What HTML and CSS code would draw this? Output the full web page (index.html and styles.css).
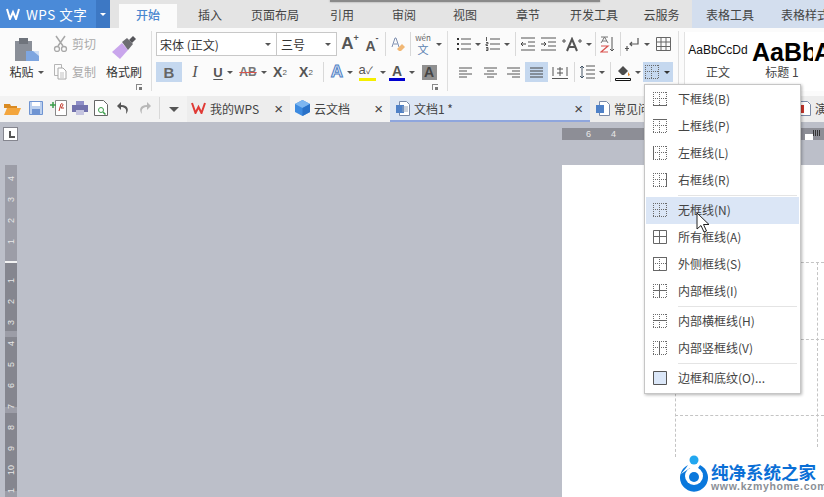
FILE: index.html
```html
<!DOCTYPE html>
<html lang="zh-CN">
<head>
  <meta charset="UTF-8" />
  <title>WPS 文字</title>
  <link rel="stylesheet" href="styles.css">
</head>
<body>
  <svg class="defs" width="0" height="0">
    <symbol id="dots" viewBox="0 0 14 14">
      <path d="M0 .5h14M0 13.500h14M.5 0v14M13.500 0v14M6.500 0v14M0 6.500h14" fill="none" stroke="#6a6a6a" stroke-dasharray="1 1"/>
    </symbol>
  </svg>

  <div class="tabbar">
    <div class="brand">
      <svg class="brand-logo" viewBox="0 0 14 12"><path d="M1 1l3 10 3-7 3 7 3-10" fill="none" stroke="#fff" stroke-width="2"/></svg>
      <span class="brand-name">WPS 文字</span>
      <span class="brand-menu"><i class="arrow arrow-white"></i></span>
    </div>
    <div class="tab-gap"></div>
    <div class="tab tab-active">开始</div>
    <div class="tab">插入</div>
    <div class="tab">页面布局</div>
    <div class="tab">引用</div>
    <div class="tab">审阅</div>
    <div class="tab">视图</div>
    <div class="tab">章节</div>
    <div class="tab">开发工具</div>
    <div class="tab">云服务</div>
    <div class="tab tab-context">表格工具</div>
    <div class="tab tab-context tab-clip">表格样式</div>
    <div class="window-shadow"></div>
  </div>

  <div class="ribbon">
    <section class="group group-clip">
      <div class="paste">
        <svg width="26" height="25" viewBox="0 0 26 25"><rect x="1" y="4" width="17" height="20" fill="#8a8f98"/><rect x="5" y="1" width="9" height="6" fill="#6f747c"/><path d="M12 14h13v10H12z" fill="#7ea6e0"/><path d="M19 14l6 5v-5z" fill="#cfdff5"/></svg>
        <span class="tool-label">粘贴<i class="arrow"></i></span>
      </div>
      <div class="clip-small">
        <div class="clip-item">
          <svg width="15" height="17" viewBox="0 0 15 17"><path d="M3 1l7 10M12 1L5 11" stroke="#a8a8a8" stroke-width="1.500"/><circle cx="4" cy="14" r="2.500" fill="none" stroke="#a8a8a8" stroke-width="1.300"/><circle cx="11" cy="14" r="2.500" fill="none" stroke="#a8a8a8" stroke-width="1.300"/></svg>
          <span>剪切</span>
        </div>
        <div class="clip-item">
          <svg width="15" height="17" viewBox="0 0 15 17"><path d="M1.500 1.500h7v11h-7z" fill="none" stroke="#b5b5b5"/><path d="M5 5h5l3 3v8H5z" fill="#fff" stroke="#a8a8a8"/><path d="M7 10h4M7 12h4M7 14h4" stroke="#c0c0c0"/></svg>
          <span>复制</span>
        </div>
      </div>
      <div class="painter">
        <svg width="26" height="25" viewBox="0 0 26 25"><path d="M1 17l10-9 6 7-8 9z" fill="#c9a6ec"/><path d="M11 7l5-4 6 6-5 6z" fill="#6d6d72"/><path d="M18 5l4-4 3 3-4 4z" fill="#55555a"/></svg>
        <span class="tool-label">格式刷</span>
      </div>
      <i class="launcher"></i>
    </section>

    <section class="group group-font">
      <div class="font-top">
        <div class="select">宋体 (正文)<i class="arrow"></i></div>
        <div class="select select-size">三号<i class="arrow"></i></div>
        <div class="tool glyph-big">A<sup>+</sup></div>
        <div class="tool glyph-mid">A<sup>-</sup></div>
        <div class="divider"></div>
        <div class="tool">
          <svg width="16" height="17" viewBox="0 0 16 17"><path d="M2 11L5 2h1l3 9M3.500 8h4" fill="none" stroke="#7e8fb0"/><path d="M7 13l5-5 3 3-4 4H9z" fill="#f1b774"/></svg>
        </div>
        <div class="divider"></div>
        <div class="tool tool-wen">
          <span class="wen"><small>wén</small><span>文</span></span><i class="arrow"></i>
        </div>
      </div>
      <div class="font-bottom">
        <div class="tool tool-on text-b">B</div>
        <div class="tool text-i">I</div>
        <div class="tool"><span class="text-u">U</span><i class="arrow"></i></div>
        <div class="tool"><span class="text-s">AB</span><i class="arrow"></i></div>
        <div class="tool text-x">X<sup>2</sup></div>
        <div class="tool text-x">X<sub>2</sub></div>
        <div class="divider"></div>
        <div class="tool"><span class="text-effect">A</span><i class="arrow"></i></div>
        <div class="tool"><span class="text-mark">a<em>✓</em></span><i class="arrow"></i></div>
        <div class="tool"><span class="text-color">A</span><i class="arrow"></i></div>
        <div class="tool"><span class="text-shade">A</span></div>
      </div>
      <i class="launcher"></i>
    </section>

    <section class="group group-para">
      <div class="para-top">
        <div class="tool">
          <svg width="15" height="14" viewBox="0 0 15 14"><path d="M5 2h10M5 7h10M5 12h10" stroke="#555"/><path d="M1 1h2v2H1zM1 6h2v2H1zM1 11h2v2H1z" fill="#333"/></svg><i class="arrow"></i>
        </div>
        <div class="tool">
          <svg width="15" height="16" viewBox="0 0 15 16"><path d="M5 3h10M5 8h10M5 13h10" stroke="#555"/><path d="M1.500 1v4M1 6.500h2v1.500H1v1.500h2M1 11.500h2v3H1M1 13h2" fill="none" stroke="#333" stroke-width=".8"/></svg><i class="arrow"></i>
        </div>
        <div class="divider"></div>
        <div class="tool">
          <svg width="14" height="14" viewBox="0 0 14 14"><path d="M0 1h14M7 5h7M7 9h7M0 13h14" stroke="#555"/><path d="M5 7H0M2 5L0 7l2 2" fill="none" stroke="#444"/></svg>
        </div>
        <div class="tool">
          <svg width="16" height="14" viewBox="0 0 16 14"><path d="M0 1h15M7 5h8M7 9h8M0 13h15" stroke="#555"/><path d="M0 7h5M3 5l2 2-2 2" fill="none" stroke="#444"/></svg>
        </div>
        <div class="tool">
          <svg width="20" height="15" viewBox="0 0 20 15"><path d="M5 14l5-12 5 12M6.500 10h7" fill="none" stroke="#555" stroke-width="2"/><path d="M0 4h4M2 2v4M16 4h4M18 2v4" stroke="#555"/></svg><i class="arrow"></i>
        </div>
        <div class="divider"></div>
        <div class="tool">
          <svg width="15" height="17" viewBox="0 0 15 17"><path d="M1 1h7M1 7l3.500-6L8 7M2 5h5" fill="none" stroke="#777"/><path d="M1 10h7L1 16h7" fill="none" stroke="#d9534f" stroke-width="1.200"/><path d="M12 1v14M10 13l2 2 2-2" fill="none" stroke="#555"/></svg>
        </div>
        <div class="divider"></div>
        <div class="tool">
          <svg width="15" height="15" viewBox="0 0 15 15"><path d="M13 1v6H5M7 5L5 7l2 2M2 9v5M0 11.500h4" fill="none" stroke="#555" stroke-width="1.200"/></svg><i class="arrow"></i>
        </div>
        <div class="tool">
          <svg width="15" height="14" viewBox="0 0 15 14"><path d="M.5.500h14v13H.5zM5 .500v13M10 .500v13M.5 5h14M.5 9.500h14" fill="none" stroke="#666"/></svg>
        </div>
      </div>
      <div class="para-bottom">
        <div class="tool">
          <svg width="13" height="11" viewBox="0 0 13 11"><path d="M0 1h13M0 4h8M0 7h13M0 10h8" stroke="#555"/></svg>
        </div>
        <div class="tool">
          <svg width="13" height="11" viewBox="0 0 13 11"><path d="M0 1h13M3 4h7M0 7h13M3 10h7" stroke="#555"/></svg>
        </div>
        <div class="tool">
          <svg width="13" height="11" viewBox="0 0 13 11"><path d="M0 1h13M5 4h8M0 7h13M5 10h8" stroke="#555"/></svg>
        </div>
        <div class="tool tool-on">
          <svg width="13" height="11" viewBox="0 0 13 11"><path d="M0 1h13M0 4h13M0 7h13M0 10h13" stroke="#444"/></svg>
        </div>
        <div class="tool">
          <svg width="16" height="13" viewBox="0 0 16 13"><path d="M0 12.500h16M1 1v9M15 1v9M5 3h6M5 7h6M8 1v9" fill="none" stroke="#555"/></svg>
        </div>
        <div class="divider"></div>
        <div class="tool">
          <svg width="15" height="14" viewBox="0 0 15 14"><path d="M6 1h9M6 5h9M6 9h9M6 13h9" stroke="#555"/><path d="M2 1v12M0 3l2-2 2 2M0 11l2 2 2-2" fill="none" stroke="#456"/></svg><i class="arrow"></i>
        </div>
        <div class="divider"></div>
        <div class="tool">
          <svg width="16" height="17" viewBox="0 0 16 17"><path d="M3 7l5-5 5 5-4 4H7z" fill="#4d4d4d"/><path d="M13 8l2 3-2 1z" fill="#e08a2e"/><path d="M.5 14.500h15v2H.5z" fill="#fff" stroke="#111"/></svg><i class="arrow"></i>
        </div>
        <div class="tool tool-on tool-borders">
          <svg width="14" height="14" viewBox="0 0 14 14"><use href="#dots"/></svg><i class="arrow arrow-dark"></i>
        </div>
      </div>
    </section>

    <section class="gallery">
      <div class="style-card">
        <div class="sample sample-normal">AaBbCcDd</div>
        <div class="style-name">正文</div>
      </div>
      <div class="style-card">
        <div class="sample sample-head">AaBb</div>
        <div class="style-name">标题 1</div>
      </div>
      <div class="style-card">
        <div class="sample sample-head">AaBb</div>
      </div>
    </section>
  </div>

  <div class="quickbar">
    <div class="quick-tools">
      <div class="quick">
        <svg width="17" height="13" viewBox="0 0 17 13"><path d="M0 2h6l1 2h6v2H0z" fill="#d98a22"/><path d="M0 13l3-7h14l-3 7z" fill="#f3a53c"/></svg>
      </div>
      <div class="quick">
        <svg width="14" height="14" viewBox="0 0 14 14"><path d="M.5.500h13v13H.5z" fill="#bcd0ee" stroke="#6f94d2"/><path d="M3 1h8v4H3z" fill="#fff"/><path d="M3 8h8v5H3z" fill="#6f94d2"/></svg>
      </div>
      <div class="quick">
        <svg width="17" height="16" viewBox="0 0 17 16"><path d="M5.500.500h11v15h-11z" fill="#fff" stroke="#888"/><path d="M9 11l2-7c1-1 2 0 2 1l-2 3h3" fill="none" stroke="#c0392b"/><path d="M0 5h6M3 2v6" stroke="#3a9d4a" stroke-width="1.500"/></svg>
      </div>
      <div class="quick">
        <svg width="16" height="14" viewBox="0 0 16 14"><path d="M4 0h8v4H4z" fill="#8f8fc8"/><path d="M0 4h16v7H0z" fill="#7272ad"/><path d="M4 9h8v5H4z" fill="#c5c5e0"/></svg>
      </div>
      <div class="quick">
        <svg width="14" height="16" viewBox="0 0 14 16"><path d="M.5.500h9l4 4v11H.5z" fill="#fff" stroke="#666"/><circle cx="7" cy="10" r="2.500" fill="none" stroke="#3a9d4a"/><path d="M9 12l2.500 2.500" stroke="#3a9d4a" stroke-width="1.500"/></svg>
      </div>
      <div class="quick">
        <svg width="14" height="14" viewBox="0 0 14 14"><path d="M5 1L1 5l4 4V6c4 0 6 2 5 7 3-3 3-9-5-9z" fill="#555"/></svg>
      </div>
      <div class="quick">
        <svg width="14" height="14" viewBox="0 0 14 14"><path d="M9 1l4 4-4 4V6c-4 0-6 2-5 7-3-3-3-9 5-9z" fill="#b8b8b8"/></svg>
      </div>
      <div class="divider divider-quick"></div>
      <div class="quick quick-more"><i class="arrow arrow-big"></i></div>
    </div>
    <div class="doc-tabs">
      <div class="doc-tab doc-tab-home">
        <svg width="15" height="12" viewBox="0 0 15 12"><path d="M1 1l3.500 10L7.500 5l3 6L14 1" fill="none" stroke="#e03a35" stroke-width="2"/></svg>
        <span>我的WPS</span><b class="close">×</b>
      </div>
      <div class="doc-tab doc-tab-cloud">
        <svg width="15" height="16" viewBox="0 0 15 16"><path d="M7.500 0L15 4v8l-7.500 4L0 12V4z" fill="#3d8be0"/><path d="M7.500 8L15 4 7.500 0 0 4z" fill="#7db6f0"/><path d="M7.500 8v8l7.500-4V4z" fill="#2a72c8"/></svg>
        <span>云文档</span><b class="close">×</b>
      </div>
      <div class="doc-tab doc-tab-on">
        <svg width="14" height="15" viewBox="0 0 14 15"><path d="M3.500.500h7l3 3v11h-10z" fill="#fff" stroke="#7a8aa8"/><path d="M0 4h8v8H0z" fill="#4f81c7"/><path d="M6 6h6M6 8h6M6 10h6" stroke="#98a4b8"/></svg>
        <span>文档1 *</span><b class="close">×</b>
      </div>
      <div class="doc-tab">
        <svg width="14" height="15" viewBox="0 0 14 15"><path d="M3.500.500h7l3 3v11h-10z" fill="#fff" stroke="#7a8aa8"/><path d="M0 4h8v8H0z" fill="#4f81c7"/></svg>
        <span>常见问题</span>
      </div>
      <div class="doc-tab doc-tab-last">
        <svg width="14" height="15" viewBox="0 0 14 15"><path d="M3.500.500h7l3 3v11h-10z" fill="#fff" stroke="#7a8aa8"/><path d="M0 4h7v8H0z" fill="#c8352c"/></svg>
        <span>演示</span>
      </div>
    </div>
  </div>

  <main class="workspace">
    <div class="ruler-corner"></div>
    <div class="top-ruler">
      <span>6</span><span>4</span>
    </div>
    <div class="top-ruler-end"><i></i></div>
    <div class="side-ruler">
      <div class="ruler-part ruler-above">
        <span>4</span><span>3</span><span>2</span><span>1</span>
      </div>
      <div class="ruler-part ruler-below">
        <span>1</span><span>2</span><span>3</span><span>4</span><span>5</span><span>6</span><span>7</span><span>8</span><span>9</span><span>10</span><span>1</span>
      </div>
    </div>
    <div class="page">
      <i class="guide-h guide-row1"></i>
      <i class="guide-h guide-row2"></i>
      <i class="guide-h guide-row3"></i>
      <i class="guide-v guide-col1"></i>
      <i class="guide-v guide-col2"></i>
    </div>
  </main>

  <div class="border-menu">
    <div class="menu-item">
      <svg class="menu-icon" viewBox="0 0 14 14"><use href="#dots"/><path d="M0 13.500h14"/></svg>下框线(B)
    </div>
    <div class="menu-item">
      <svg class="menu-icon" viewBox="0 0 14 14"><use href="#dots"/><path d="M0 .5h14"/></svg>上框线(P)
    </div>
    <div class="menu-item">
      <svg class="menu-icon" viewBox="0 0 14 14"><use href="#dots"/><path d="M.5 0v14"/></svg>左框线(L)
    </div>
    <div class="menu-item">
      <svg class="menu-icon" viewBox="0 0 14 14"><use href="#dots"/><path d="M13.500 0v14"/></svg>右框线(R)
    </div>
    <div class="menu-sep"></div>
    <div class="menu-item menu-item-on">
      <svg class="menu-icon" viewBox="0 0 14 14"><use href="#dots"/></svg>无框线(N)
    </div>
    <div class="menu-item">
      <svg class="menu-icon" viewBox="0 0 14 14"><path d="M.5.500h13v13H.5zM6.500 0v14M0 6.500h14"/></svg>所有框线(A)
    </div>
    <div class="menu-item">
      <svg class="menu-icon" viewBox="0 0 14 14"><use href="#dots"/><path d="M.5.500h13v13H.5z"/></svg>外侧框线(S)
    </div>
    <div class="menu-item">
      <svg class="menu-icon" viewBox="0 0 14 14"><use href="#dots"/><path d="M6.500 0v14M0 6.500h14"/></svg>内部框线(I)
    </div>
    <div class="menu-sep"></div>
    <div class="menu-item">
      <svg class="menu-icon" viewBox="0 0 14 14"><use href="#dots"/><path d="M0 6.500h14"/></svg>内部横框线(H)
    </div>
    <div class="menu-item">
      <svg class="menu-icon" viewBox="0 0 14 14"><use href="#dots"/><path d="M6.500 0v14"/></svg>内部竖框线(V)
    </div>
    <div class="menu-sep"></div>
    <div class="menu-item">
      <svg class="menu-icon menu-icon-box" viewBox="0 0 14 14"><path d="M.5.500h13v13H.5z" fill="#dbe7f8"/></svg>边框和底纹(O)...
    </div>
  </div>

  <svg class="cursor" width="14" height="21" viewBox="0 0 14 21"><path d="M1 1v16l4-3.500 3 6.500 2.500-1-3-6.500H13z" fill="#fff" stroke="#222"/></svg>

  <div class="watermark">
    <svg width="28" height="39" viewBox="0 0 28 39"><circle cx="14" cy="5" r="4.500" fill="#22a7f0"/><path d="M8 10a14 14 0 1 0 12 0l-2 3 5 6-9-6h-4l-9 6 5-6z" fill="#0a78dc"/><circle cx="14" cy="21" r="9" fill="#fff"/><circle cx="14" cy="22" r="5" fill="#0a78dc"/></svg>
    <div class="mark-text">
      <div class="mark-title">纯净系统之家</div>
      <div class="mark-url">www.kzmyhome.com</div>
    </div>
  </div>
</body>
</html>
```

FILE: styles.css
```css
* {
  box-sizing: border-box;
}

body {
  margin: 0;
  width: 824px;
  height: 497px;
  overflow: hidden;
  position: relative;
  background: #bcbfc9;
  font-family: "Noto Sans CJK SC", "Noto Sans", sans-serif;
  font-size: 12px;
  color: #444;
}

.defs {
  position: absolute;
}

.arrow {
  display: inline-block;
  width: 0;
  height: 0;
  border-left: 3px solid transparent;
  border-right: 3px solid transparent;
  border-top: 3px solid #555;
}

.arrow-white {
  border-top-color: #fff;
}

.arrow-dark {
  border-top-color: #333;
}

.arrow-big {
  border-left-width: 5px;
  border-right-width: 5px;
  border-top-width: 5px;
}

.divider {
  width: 1px;
  height: 24px;
  background: #d9d9d9;
  justify-self: center;
  align-self: center;
}

/* top tabs */
.tabbar {
  display: grid;
  grid-template-columns: 110px 9px 58px 66px 64px 70px 54px 68px 58px 74px 61px 76px 56px;
  height: 28px;
  background: #e4e4e4;
  position: relative;
  overflow: hidden;
}

.brand {
  display: flex;
  align-items: center;
  background: #4a8ad8;
  color: #fff;
}

.brand-logo {
  width: 14px;
  height: 12px;
  margin-left: 6px;
}

.brand-name {
  margin-left: 6px;
  font-size: 13.500px;
  letter-spacing: .5px;
  flex: 1;
  white-space: nowrap;
}

.brand-menu {
  width: 14px;
  height: 28px;
  background: #3d78c4;
  display: flex;
  align-items: center;
  justify-content: center;
}

.tab {
  display: flex;
  align-items: center;
  justify-content: center;
  white-space: nowrap;
}

.tab-active {
  background: #fbfbfb;
  color: #4a86cf;
  margin-top: 4px;
  padding-bottom: 3px;
  font-weight: 500;
}

.tab-context {
  background: #d3deee;
}

.tab-clip {
  justify-content: flex-start;
  padding-left: 13px;
}

.window-shadow {
  position: absolute;
  left: 330px;
  top: 0;
  width: 270px;
  height: 2px;
  background: #8a8a8a;
  box-shadow: 0 0 2px #8a8a8a;
}

/* ribbon */
.ribbon {
  display: flex;
  height: 68px;
  background: #fbfbfb;
}

.group {
  position: relative;
  border-right: 1px solid #dedede;
  margin: 3px 0 5px;
  flex: none;
}

.group-clip {
  width: 152px;
  display: flex;
}

.group-font {
  width: 296px;
  padding: 1px 0 0 4px;
}

.group-para {
  width: 231px;
  padding: 1px 0 0 5px;
}

.launcher {
  position: absolute;
  right: 9px;
  bottom: 1px;
  width: 6px;
  height: 6px;
  border: 1px solid #888;
  border-width: 1px 0 0 1px;
}

.launcher::after {
  content: "";
  position: absolute;
  right: 0;
  bottom: 0;
  width: 3px;
  height: 3px;
  background: #777;
}

.tool {
  display: flex;
  align-items: center;
  justify-content: center;
  gap: 4px;
  height: 20px;
  white-space: nowrap;
}

.tool-on {
  background: #c5d8ef;
}

.tool-label {
  white-space: nowrap;
  display: flex;
  align-items: center;
  gap: 4px;
  color: #333;
  line-height: 16px;
}

.paste {
  width: 53px;
  display: flex;
  flex-direction: column;
  align-items: center;
  padding: 6px 0 0;
  gap: 2px;
}

.clip-small {
  width: 51px;
  display: flex;
  flex-direction: column;
  gap: 9px;
  padding-top: 3px;
}

.clip-item {
  display: flex;
  align-items: center;
  gap: 4px;
  color: #aaa;
  height: 19px;
}

.painter {
  width: 40px;
  display: flex;
  flex-direction: column;
  align-items: center;
  padding-top: 4px;
  gap: 4px;
}

/* font group */
.font-top {
  display: grid;
  grid-template-columns: 121px 61px 24px 20px 6px 20px 4px 33px;
  height: 24px;
  align-items: center;
}

.font-bottom {
  display: grid;
  grid-template-columns: 26px 26px 30px 30px 24px 28px 6px 32px 28px 32px 22px;
  margin-top: 6px;
  height: 20px;
}

.font-bottom .divider {
  height: 20px;
}

.select {
  height: 24px;
  border: 1px solid #c8c8c8;
  background: #fff;
  display: flex;
  align-items: center;
  justify-content: space-between;
  padding: 0 5px 0 3px;
  color: #333;
}

.select-size {
  border-left: 0;
  padding-left: 4px;
  margin-right: 1px;
}

.glyph-big,
.glyph-mid {
  font-family: "Liberation Sans", sans-serif;
  align-items: flex-end;
  gap: 0;
  color: #555;
  font-weight: bold;
}

.glyph-big {
  font-size: 17px;
}

.glyph-mid {
  font-size: 14px;
}

.glyph-big sup,
.glyph-mid sup {
  font-size: 9px;
  align-self: flex-start;
  line-height: 1;
}

.wen {
  display: flex;
  flex-direction: column;
  align-items: center;
  font-size: 11px;
  line-height: 12px;
  color: #5a7fb0;
}

.wen small {
  font-size: 8px;
  line-height: 10px;
  color: #666;
}

.tool-wen {
  gap: 5px;
  height: 24px;
}

.font-bottom .tool {
  font-family: "Liberation Sans", sans-serif;
  color: #555;
}

.text-b {
  font-weight: bold;
  font-size: 15px;
  color: #666 !important;
}

.text-i {
  font-family: "Liberation Serif", serif !important;
  font-style: italic;
  font-size: 16px;
}

.text-u {
  text-decoration: underline;
  font-weight: bold;
  font-size: 13px;
  text-underline-offset: 2px;
}

.text-s {
  text-decoration: line-through;
  text-decoration-color: #d9534f;
  font-size: 12px;
  font-weight: bold;
  color: #777;
}

.text-x {
  gap: 0;
  font-size: 14px;
  font-weight: bold;
}

.text-x sup,
.text-x sub {
  font-size: 8px;
  font-weight: normal;
}

.text-effect {
  font-size: 17px;
  font-weight: bold;
  color: #dfe9f8;
  -webkit-text-stroke: 1px #4f7fc4;
}

.text-mark {
  font-size: 13px;
  line-height: 14px;
  border-bottom: 3px solid #f5ef00;
  color: #555;
  width: 17px;
}

.text-mark em {
  font-style: normal;
  font-size: 10px;
}

.text-color {
  font-size: 14px;
  font-weight: bold;
  line-height: 14px;
  border-bottom: 3px solid #0000d0;
  width: 16px;
  text-align: center;
}

.text-shade {
  background: #909090;
  color: #444;
  font-size: 14px;
  font-weight: bold;
  width: 15px;
  height: 15px;
  line-height: 15px;
  text-align: center;
}

/* paragraph group */
.para-top {
  display: grid;
  grid-template-columns: 30px 29px 6px 19px 23px 33px 4px 21px 4px 31px 20px;
  height: 24px;
  align-items: center;
}

.para-bottom {
  display: grid;
  grid-template-columns: 25px 24px 23px 23px 24px 4px 32px 4px 31px 30px;
  margin-top: 6px;
  height: 20px;
}

.para-bottom .divider {
  height: 20px;
}

.tool-borders {
  justify-content: flex-start;
  padding-left: 2px;
  gap: 5px;
}

/* style gallery */
.gallery {
  display: grid;
  grid-template-columns: 66px 62px 12px;
  margin: 4px 0 5px 5px;
  background: #fff;
  border-left: 1px solid #e2e2e2;
  overflow: hidden;
}

.style-card {
  display: flex;
  flex-direction: column;
  align-items: center;
  overflow: hidden;
  font-family: "Liberation Sans", sans-serif;
}

.sample {
  height: 28px;
  display: flex;
  align-items: center;
  color: #111;
  white-space: nowrap;
  margin-top: 4px;
  flex: none;
}

.sample-normal {
  font-size: 12px;
}

.sample-head {
  font-size: 25px;
  font-weight: bold;
  color: #000;
  align-self: flex-start;
  padding: 4px 0 0 1px;
}

.style-name {
  margin-top: -1px;
  font-family: "Noto Sans CJK SC", sans-serif;
  color: #444;
}

/* quick access and document tabs */
.quickbar {
  display: flex;
  height: 26px;
  background: #f3f3f3;
}

.quick-tools {
  display: grid;
  grid-template-columns: 24px 23px 23px 20px 21px 23px 22px 7px 22px;
  width: 187px;
  align-items: center;
  padding-bottom: 2px;
}

.quick {
  display: flex;
  align-items: center;
  justify-content: center;
}

.quick-more {
  padding-top: 2px;
}

.divider-quick {
  height: 22px;
}

.doc-tabs {
  display: grid;
  grid-template-columns: 103px 100px 200px 200px 34px;
}

.doc-tab {
  display: flex;
  align-items: center;
  gap: 4px;
  padding: 0 7px 2px 6px;
  background: #ededed;
  white-space: nowrap;
  overflow: hidden;
}

.doc-tab svg,
.doc-tab span {
  flex: none;
}

.doc-tab-home {
  padding-left: 4px;
}

.doc-tab-cloud {
  background: #f3f3f3;
  padding-left: 5px;
}

.doc-tab-on {
  background: #dce6f4;
  border-bottom: 2px solid #8fa6dd;
  padding-bottom: 0;
}

.doc-tab-last {
  padding-left: 7px;
}

.close {
  margin-left: auto;
  font-family: "Liberation Sans", sans-serif;
  font-size: 15px;
  font-weight: normal;
  color: #444;
}

/* document area */
.workspace {
  position: relative;
  height: 375px;
  background: #bcbfc9;
}

.ruler-corner {
  position: absolute;
  left: 3px;
  top: 5px;
  width: 15px;
  height: 14px;
  background: #fff;
  border: 1px solid #85868f;
}

.ruler-corner::after {
  content: "";
  position: absolute;
  left: 5px;
  top: 3px;
  width: 4px;
  height: 5px;
  border: solid #555;
  border-width: 0 0 2px 2px;
}

.top-ruler {
  position: absolute;
  left: 562px;
  top: 6px;
  width: 82px;
  height: 12px;
  background: #8d8e96;
  color: #e8e8e8;
  font-size: 9px;
  line-height: 12px;
  display: flex;
  gap: 20px;
  padding-left: 24px;
  font-family: "Liberation Sans", sans-serif;
}

.top-ruler-end {
  position: absolute;
  left: 801px;
  top: 6px;
  width: 23px;
  height: 12px;
  background: #8d8e96;
}

.top-ruler-end i {
  position: absolute;
  left: 4px;
  top: 6px;
  width: 8px;
  height: 6px;
  background: #fff;
}

.top-ruler-end::after {
  content: "";
  position: absolute;
  left: 12px;
  top: 2px;
  width: 7px;
  height: 6px;
  background: repeating-linear-gradient(90deg, #333 0 1px, transparent 1px 2px);
}

.side-ruler {
  position: absolute;
  left: 5px;
  top: 43px;
  width: 12px;
}

.ruler-part {
  display: flex;
  flex-direction: column;
  color: #e8e8e8;
  font-family: "Liberation Sans", sans-serif;
  font-size: 9px;
}

.ruler-part span {
  height: 21px;
  flex: none;
  display: flex;
  align-items: center;
  justify-content: center;
  writing-mode: vertical-rl;
  transform: rotate(180deg);
}

.ruler-above {
  height: 96px;
  background: #9c9da7;
  padding-top: 3px;
}

.ruler-below {
  height: 242px;
  border-top: 2px solid #f2f2f2;
  padding-top: 7px;
  background: linear-gradient(#85868f 0 68px, #9c9da7 68px 74px, #85868f 74px 144px, #9c9da7 144px 150px, #85868f 150px 228px, #9c9da7 228px);
}

.page {
  position: absolute;
  left: 562px;
  top: 43px;
  width: 262px;
  height: 332px;
  background: #fff;
}

.guide-h,
.guide-v {
  position: absolute;
  border: 0 dashed #c4c4c4;
}

.guide-h {
  left: 113px;
  right: 0;
  border-top-width: 1px;
}

.guide-v {
  top: 97px;
  border-left-width: 1px;
}

.guide-row1 {
  top: 97px;
}

.guide-row2 {
  top: 174px;
}

.guide-row3 {
  top: 250px;
}

.guide-col1 {
  left: 113px;
  height: 195px;
}

.guide-col2 {
  left: 255px;
  height: 185px;
}

/* border dropdown */
.border-menu {
  position: absolute;
  left: 644px;
  top: 84px;
  width: 157px;
  height: 310px;
  padding: 1px;
  background: #fff;
  border: 1px solid #c6c6c6;
  box-shadow: 1px 1px 3px rgba(0, 0, 0, .3);
}

.menu-item {
  display: flex;
  align-items: center;
  height: 27px;
  padding: 0 0 2px 7px;
  white-space: nowrap;
  color: #444;
}

.menu-item-on {
  background: #dbe6f6;
}

.menu-icon {
  width: 14px;
  height: 14px;
  margin-right: 11px;
  flex: none;
  fill: none;
  stroke: #666;
}

.menu-icon-box {
  stroke: #555;
}

.menu-sep {
  height: 1px;
  margin: 1px 2px 1px 32px;
  background: #e4e4e4;
}

.cursor {
  position: absolute;
  left: 696px;
  top: 212px;
}

/* site watermark */
.watermark {
  position: absolute;
  left: 680px;
  top: 455px;
  display: flex;
  gap: 3px;
}

.mark-text {
  padding-top: 8px;
}

.mark-title {
  font-size: 17.500px;
  font-weight: 700;
  line-height: 18px;
  color: #0a6fd6;
  white-space: nowrap;
}

.mark-url {
  font-family: "Liberation Sans", sans-serif;
  font-size: 10.500px;
  font-weight: bold;
  letter-spacing: .65px;
  line-height: 11px;
  color: #8a8f96;
  white-space: nowrap;
}
```
